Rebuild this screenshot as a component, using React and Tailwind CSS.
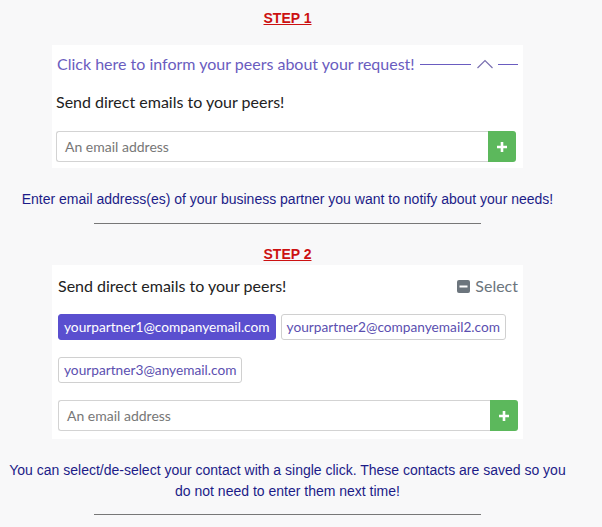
import React from "react";

const prox = { fontFamily: "Lato, 'Open Sans', sans-serif" };

function EmailInput() {
  return (
    <div className="flex h-[31px] w-full">
      <div className="flex-1 flex items-center border border-[#d3d3d3] border-r-0 rounded-l-[3px] bg-white pl-[8px] text-[14px] text-[#777]" style={prox}>
        An email address
      </div>
      <div className="w-[28px] h-full bg-[#5cb85c] rounded-r-[3px] flex items-center justify-center">
        <svg width="12" height="12" viewBox="0 0 12 12">
          <path d="M6 1v10M1 6h10" stroke="#fff" strokeWidth="2.6" />
        </svg>
      </div>
    </div>
  );
}

function Chip({ children, active }) {
  return (
    <div
      className={
        "h-[26px] flex items-center px-[5px] rounded-[3px] border text-[13.7px] whitespace-nowrap " +
        (active ? "bg-[#5a4fcf] border-[#5a4fcf] text-white" : "bg-white border-[#d0d0d0] text-[#5b4fb0]")
      }
      style={prox}
    >
      {children}
    </div>
  );
}

export default function App() {
  return (
    <div className="w-[602px] h-[527px] bg-[#f8f8f9] overflow-hidden">
      <div className="w-[575px] flex flex-col items-center pt-[10px]">
        <div className="h-[16px] leading-[16px] text-[14px] font-bold text-[#cc1111] underline" style={{ fontFamily: "'Liberation Sans', Arial, sans-serif" }}>
          STEP 1
        </div>
        <div className="mt-[19px] w-[471px] bg-white pl-[4px] pr-[7px] pt-[9px] pb-[6px]">
          <div className="h-[20px] flex items-center text-[16px] text-[#6a5cc0] whitespace-nowrap" style={prox}>
            <span className="ml-[1px] shrink-0">Click here to inform your peers about your request!</span>
            <div className="ml-[5px] w-[51px] h-px bg-[#6a5cc0] shrink-0" />
            <svg className="ml-[6px] shrink-0" width="16" height="10" viewBox="0 0 16 10">
              <path d="M0.5 9L8 1.5L15.5 9" fill="none" stroke="#7a70b0" strokeWidth="1.2" />
            </svg>
            <div className="ml-[5px] w-[20px] h-px bg-[#6a5cc0] shrink-0" />
          </div>
          <div className="mt-[18px] h-[20px] flex items-center text-[16px] text-[#222]" style={prox}>
            Send direct emails to your peers!
          </div>
          <div className="mt-[19px]">
            <EmailInput />
          </div>
        </div>
        <div className="mt-[23px] h-[16px] leading-[16px] text-[14px] text-[#1c1c88] text-center whitespace-nowrap" style={{ fontFamily: "'Liberation Sans', Arial, sans-serif" }}>
          Enter email address(es) of your business partner you want to notify about your needs!
        </div>
        <div className="mt-[16px] w-[387px] h-px bg-[#777]" />
        <div className="mt-[22px] h-[16px] leading-[16px] text-[14px] font-bold text-[#cc1111] underline" style={{ fontFamily: "'Liberation Sans', Arial, sans-serif" }}>
          STEP 2
        </div>
        <div className="mt-[3px] w-[471px] bg-white pl-[6px] pr-[5px] pt-[11px] pb-[8px]">
          <div className="h-[20px] flex items-center justify-between text-[16px]" style={prox}>
            <span className="text-[#222]">Send direct emails to your peers!</span>
            <span className="flex items-center text-[#6c757d]">
              <svg width="13" height="13" viewBox="0 0 13 13" className="mr-[5px]">
                <rect x="0" y="0" width="13" height="13" rx="2" fill="#6c757d" />
                <rect x="2.5" y="5.5" width="8" height="2" fill="#fff" />
              </svg>
              Select
            </span>
          </div>
          <div className="mt-[18px] flex flex-wrap gap-x-[5px] gap-y-[17px]">
            <Chip active>yourpartner1@companyemail.com</Chip>
            <Chip>yourpartner2@companyemail2.com</Chip>
            <Chip>yourpartner3@anyemail.com</Chip>
          </div>
          <div className="mt-[17px]">
            <EmailInput />
          </div>
        </div>
        <div className="mt-[21px] leading-[21px] text-[14px] text-[#1c1c88] text-center" style={{ fontFamily: "'Liberation Sans', Arial, sans-serif" }}>
          You can select/de-select your contact with a single click. These contacts are saved so you do not need to enter them next time!
        </div>
        <div className="mt-[12px] w-[387px] h-px bg-[#777]" />
      </div>
    </div>
  );
}
